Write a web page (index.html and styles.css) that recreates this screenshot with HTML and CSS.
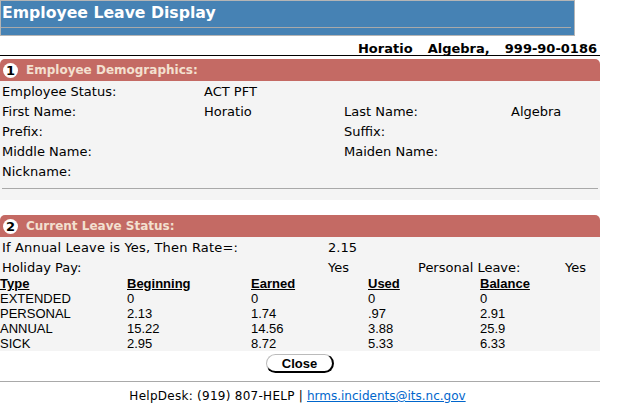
FILE: index.html
```html
<!DOCTYPE html>
<html lang="en">
<head>
  <meta charset="UTF-8">
  <title>Employee Leave Display</title>
  <link rel="stylesheet" href="styles.css">
</head>
<body>
  <div class="banner">
    <h1>Employee Leave Display</h1>
    <div class="banner-strip"></div>
  </div>

  <div class="who">Horatio &nbsp; Algebra, &nbsp; 999-90-0186</div>

  <div class="section-head">
    <span class="num">1</span> Employee Demographics:
  </div>
  <div class="panel demo">
    <div class="row"><span class="c1">Employee Status:</span><span class="c2">ACT PFT</span></div>
    <div class="row"><span class="c1">First Name:</span><span class="c2">Horatio</span><span class="c3">Last Name:</span><span class="c4">Algebra</span></div>
    <div class="row"><span class="c1">Prefix:</span><span class="c2"></span><span class="c3">Suffix:</span></div>
    <div class="row"><span class="c1">Middle Name:</span><span class="c2"></span><span class="c3">Maiden Name:</span></div>
    <div class="row"><span class="c1">Nickname:</span></div>
    <hr class="panel-rule">
  </div>

  <div class="section-head second">
    <span class="num">2</span> Current Leave Status:
  </div>
  <div class="panel leave">
    <div class="row"><span class="w1 rate">If Annual Leave is Yes, Then Rate=:</span><span>2.15</span></div>
    <div class="row"><span class="w1">Holiday Pay:</span><span class="w2">Yes</span><span class="w3">Personal Leave:</span><span>Yes</span></div>
    <table class="leave-table">
      <tr><th>Type</th><th>Beginning</th><th>Earned</th><th>Used</th><th>Balance</th></tr>
      <tr><td>EXTENDED</td><td>0</td><td>0</td><td>0</td><td>0</td></tr>
      <tr><td>PERSONAL</td><td>2.13</td><td>1.74</td><td>.97</td><td>2.91</td></tr>
      <tr><td>ANNUAL</td><td>15.22</td><td>14.56</td><td>3.88</td><td>25.9</td></tr>
      <tr><td>SICK</td><td>2.95</td><td>8.72</td><td>5.33</td><td>6.33</td></tr>
    </table>
  </div>

  <div class="actions"><button class="close-btn">Close</button></div>

  <div class="footer"><span class="help">HelpDesk: (919) 807-HELP |</span> <a href="#">hrms.incidents@its.nc.gov</a></div>
</body>
</html>
```

FILE: styles.css
```css
body {
  margin: 0;
  background: #fff;
  color: #000;
  font-family: "DejaVu Sans", Verdana, sans-serif;
  font-size: 13px;
}
.banner {
  width: 573px;
  height: 34px;
  background: #4682b4;
  border: 1px solid #b5b5b5;
}
.banner h1 {
  margin: 0;
  height: 26px;
  padding-left: 1px;
  color: #fff;
  font-size: 15.7px;
  line-height: 23px;
  font-weight: bold;
}
.banner-strip {
  margin-right: 3px;
  border-top: 1px solid #a9a9a9;
}
.who {
  width: 600px;
  box-sizing: border-box;
  height: 20px;
  padding: 5px 3px 0 0;
  text-align: right;
  font-weight: bold;
  font-size: 13px;
  line-height: 15px;
  word-spacing: 0.5px;
  white-space: nowrap;
  border-bottom: 1px solid #000;
}
.section-head {
  width: 600px;
  height: 22px;
  margin-top: 3px;
  background: #c46a64;
  border-radius: 5px 5px 0 0;
  color: #f3e0d0;
  font-weight: bold;
  font-size: 12px;
  line-height: 22px;
  display: flex;
  align-items: center;
  gap: 8px;
  padding-left: 3px;
  box-sizing: border-box;
}
.section-head.second {
  margin-top: 15px;
}
.num {
  width: 15px;
  height: 15px;
  border-radius: 50%;
  background: #fff;
  color: #000;
  font-size: 13px;
  line-height: 15px;
  text-align: center;
}
.panel {
  width: 600px;
  background: #f4f4f4;
  box-sizing: border-box;
}
.demo {
  height: 119px;
  padding-top: 1px;
}
.row {
  display: flex;
  height: 20px;
  line-height: 20px;
  padding-left: 2px;
}
.c1 { width: 202px; }
.c2 { width: 140px; }
.c3 { width: 167px; }
.panel-rule {
  margin: 6px 0 0 2px;
  width: 596px;
  border: 0;
  border-top: 1px solid #a9a9a9;
}
.leave {
  height: 114px;
  padding-top: 1px;
}
.w1 { width: 326px; }
.w2 { width: 90px; }
.w3 { width: 147px; }
.rate {
  letter-spacing: 0.17px;
}
.leave-table {
  margin-top: -1px;
  border-collapse: collapse;
  font-family: "Liberation Sans", Arial, sans-serif;
  font-size: 13px;
  table-layout: fixed;
  width: 600px;
}
.leave-table th,
.leave-table td {
  padding: 0;
  height: 15px;
  line-height: 15px;
  text-align: left;
}
.leave-table th {
  height: 14px;
  line-height: 14px;
  text-decoration: underline;
  font-weight: bold;
}
.leave-table th:nth-child(1) { width: 127px; }
.leave-table th:nth-child(2) { width: 124px; }
.leave-table th:nth-child(3) { width: 117px; }
.leave-table th:nth-child(4) { width: 112px; }
.actions {
  width: 600px;
  height: 30px;
  display: flex;
  justify-content: center;
  align-items: flex-start;
  padding-top: 3px;
  box-sizing: border-box;
}
.close-btn {
  width: 68px;
  height: 19px;
  padding: 0;
  background: #fff;
  border: 1px solid #bbb;
  border-right: 2px solid #000;
  border-bottom: 2px solid #000;
  border-radius: 10px;
  font-family: "Liberation Sans", Arial, sans-serif;
  font-size: 13px;
  font-weight: bold;
  color: #000;
}
.footer {
  width: 600px;
  box-sizing: border-box;
  border-top: 1px solid #a9a9a9;
  padding: 7px 5px 0 0;
  text-align: center;
  font-size: 12px;
  line-height: 15px;
}
.help {
  letter-spacing: 0.27px;
}
.footer a {
  color: #0066cc;
}
```
